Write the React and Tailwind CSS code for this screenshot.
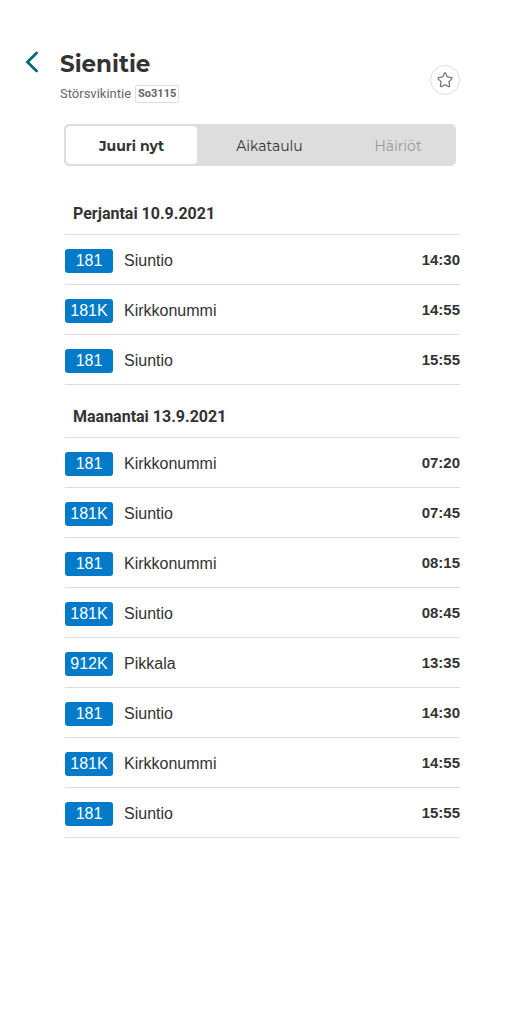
import { useState } from "react";

const days = [
  {
    title: "Perjantai 10.9.2021",
    departures: [
      ["181", "Siuntio", "14:30"],
      ["181K", "Kirkkonummi", "14:55"],
      ["181", "Siuntio", "15:55"],
    ],
  },
  {
    title: "Maanantai 13.9.2021",
    departures: [
      ["181", "Kirkkonummi", "07:20"],
      ["181K", "Siuntio", "07:45"],
      ["181", "Kirkkonummi", "08:15"],
      ["181K", "Siuntio", "08:45"],
      ["912K", "Pikkala", "13:35"],
      ["181", "Siuntio", "14:30"],
      ["181K", "Kirkkonummi", "14:55"],
      ["181", "Siuntio", "15:55"],
    ],
  },
];

const tabs = [
  { label: "Juuri nyt", size: "flex-[131_1_0%]" },
  { label: "Aikataulu", size: "flex-[145_1_0%]" },
  { label: "Häiriöt", size: "flex-[112_1_0%]", muted: true },
];

function Header() {
  return (
    <header className="flex items-start pr-[60px]">
      <div className="flex w-[60px] shrink-0 pt-[3px] pl-6">
        <button type="button" aria-label="Takaisin" className="cursor-pointer">
          <svg width="16" height="22" viewBox="0 0 16 22" fill="none" className="block">
            <path d="M12.6 2 3.4 11 12.6 20" stroke="#00677f" strokeWidth="2.7" strokeLinecap="round" strokeLinejoin="miter" />
          </svg>
        </button>
      </div>
      <div className="min-w-0 grow">
        <h1 className="font-['Montserrat','Open_Sans',sans-serif] text-[23px] leading-8 font-bold">Sienitie</h1>
        <div className="mt-1 flex items-center gap-1 font-['Roboto',sans-serif] text-[#666]">
          <span className="text-[13px] leading-5">Störsvikintie</span>
          <span className="rounded-xs border border-[#ddd] px-0.5 text-[11px] leading-4 font-bold">So3115</span>
        </div>
      </div>
      <button
        type="button"
        aria-label="Lisää suosikkeihin"
        className="mt-[17px] flex size-[30px] shrink-0 cursor-pointer items-center justify-center rounded-full border border-[#ddd]"
      >
        <svg width="16" height="16" viewBox="0 0 16 16" fill="none" className="block">
          <path
            d="M7.3 1.4Q8 .3 8.7 1.4L10.3 4.9 14.3 5.5Q15.6 5.8 14.7 6.8L11.9 9.6 12.6 13.7Q12.7 15 11.5 14.5L8 12.7 4.5 14.5Q3.3 15 3.4 13.7L4.1 9.6 1.3 6.8Q.4 5.8 1.7 5.5L5.7 4.9Z"
            stroke="#666"
            strokeWidth="1.1"
            strokeLinejoin="round"
          />
        </svg>
      </button>
    </header>
  );
}

function Day({ title, departures }) {
  return (
    <section>
      <h2 className="border-b border-[#ddd] px-2 pt-5 pb-2 font-['Roboto',sans-serif] text-base leading-6 font-bold">{title}</h2>
      <table className="w-full border-separate border-spacing-0 font-['Liberation_Sans',Arial,sans-serif]" aria-label={title}>
        <tbody>
          {departures.map(([route, destination, time], i) => (
            <tr key={i} className="h-[50px]">
              <td className="w-[59px] border-b border-[#ddd] p-0 pt-0.5">
                <span className="block h-6 w-12 rounded-[3px] bg-[#007ac9] text-center text-base leading-6 text-white">{route}</span>
              </td>
              <td className="border-b border-[#ddd] p-0 pt-0.5 text-base leading-6">{destination}</td>
              <td className="border-b border-[#ddd] p-0 text-right text-[15px] leading-6 font-bold">{time}</td>
            </tr>
          ))}
        </tbody>
      </table>
    </section>
  );
}

export default function App() {
  const [active, setActive] = useState(0);
  return (
    <main className="min-h-screen bg-white pt-12 pb-10 text-[#333]">
      <Header />
      <div className="mt-5 pr-[60px] pl-[60px]">
        <div role="tablist" className="mx-1 flex h-[42px] rounded-[5px] bg-[#ddd] p-0.5">
          {tabs.map(({ label, size, muted }, i) => (
            <button
              key={label}
              type="button"
              role="tab"
              aria-selected={active === i}
              onClick={() => setActive(i)}
              className={`${size} cursor-pointer rounded-[4px] pt-0.5 font-['Montserrat','Open_Sans',sans-serif] text-sm leading-6 ${
                active === i ? "bg-white font-bold" : ""
              } ${muted ? "text-[#999]" : "text-[#333]"}`}
            >
              {label}
            </button>
          ))}
        </div>
        <div className="mt-4 pl-[5px]">
          {days.map((day) => (
            <Day key={day.title} {...day} />
          ))}
        </div>
      </div>
    </main>
  );
}
